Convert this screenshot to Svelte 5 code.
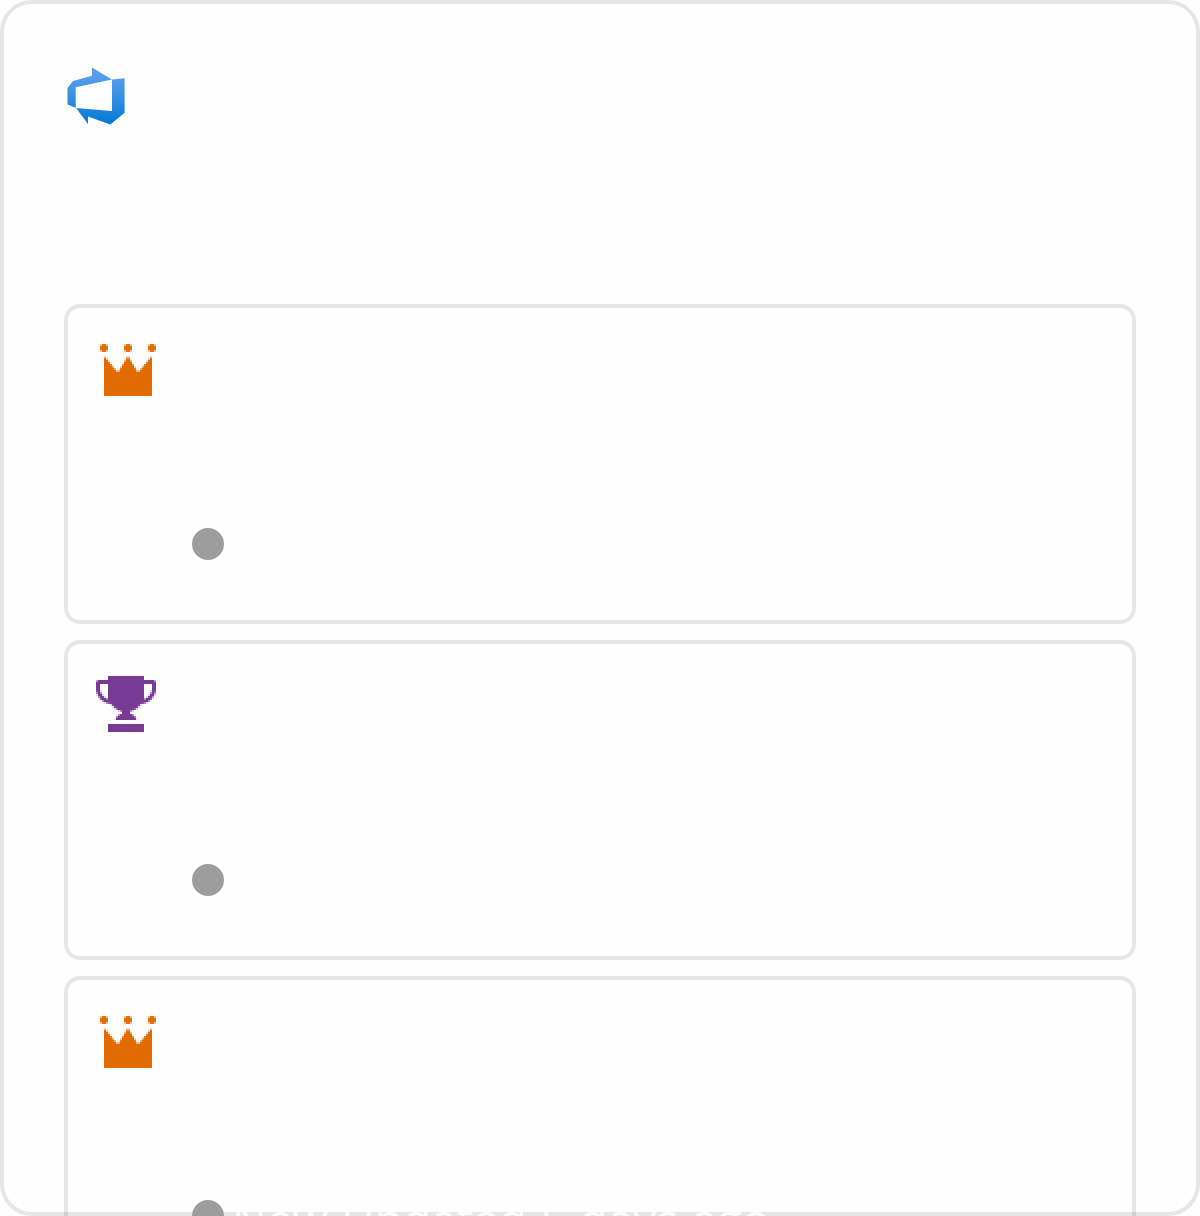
<script lang="ts">
  const items = [
    { kind: 'crown', label: 'Epic', state: '' },
    { kind: 'trophy', label: 'Feature', state: '' },
    { kind: 'crown', label: 'Epic', state: 'New Updated 5 days ago' }
  ];

  // Work item icons are drawn on a 32x32 grid; each cell's opacity is its coverage.
  function crown(x: number, y: number) {
    for (const cx of [8, 32, 56]) {
      if ((x - cx) ** 2 + (y - 12) ** 2 < 17) return true;
    }
    const u = Math.abs(x - 32);
    if (u > 24 || y > 60) return false;
    const top = u < 10 ? 20 + u * 1.65 : 36.5 - (u - 10) * 1.18;
    return y > top;
  }

  function trophy(x: number, y: number) {
    const u = Math.abs(x - 30);
    if (y > 52 && y < 60) return u < 18;
    if (u < 18 && y > 4 && y < 22) return true;
    if (y >= 22 && (u / 18) ** 2 + ((y - 22) / 18) ** 2 < 1) return true;
    if (u < 4 && y > 36 && y < 44) return true;
    if (y < 48 && (u / 10.4) ** 2 + ((y - 48) / 7) ** 2 < 1) return true;
    if (u < 12 || u > 30 || y < 8 || (y < 10 && u > 28.8)) return false;
    const outer = y < 16 || ((u - 14) / 16) ** 2 + ((y - 16) / 16) ** 2 < 1;
    const inner =
      u > 18 && y > 12 && (y < 16 ? u < 26 : ((u - 14) / 12) ** 2 + ((y - 16) / 12) ** 2 < 1);
    return outer && !inner;
  }

  function cells(inside: (x: number, y: number) => boolean) {
    const out: { x: number; y: number; a: number }[] = [];
    for (let y = 0; y < 64; y += 2) {
      for (let x = 0; x < 64; x += 2) {
        let n = 0;
        for (let j = 0; j < 4; j++)
          for (let i = 0; i < 4; i++)
            if (inside(x + 0.25 + i / 2, y + 0.25 + j / 2)) n++;
        if (n) out.push({ x, y, a: n / 16 });
      }
    }
    return out;
  }

  const icons: Record<string, { x: number; y: number; a: number }[]> = {
    crown: cells(crown),
    trophy: cells(trophy)
  };
</script>

<main class="panel">
  <header>
    <svg class="logo" viewBox="0 0 64 64" aria-label="Azure DevOps">
      <defs>
        <linearGradient id="devops" x1="0" y1="1" x2="0" y2="0">
          <stop offset="0" stop-color="#0078d4" />
          <stop offset="0.16" stop-color="#1380da" />
          <stop offset="0.53" stop-color="#3c91e5" />
          <stop offset="0.82" stop-color="#559cec" />
          <stop offset="1" stop-color="#5ea0ef" />
        </linearGradient>
      </defs>
      <path fill="url(#devops)" fill-rule="evenodd" d="M3.5 24 9 17 28 11.7V3.5L48 15.6 60.6 14.2V48.8L46.4 60.5 24 52.6V60L12 44.1 3.5 40.5ZM48 15.6 11.7 23.2V44.1L48 47Z" />
    </svg>
  </header>
  <section class="list">
    {#each items as item}
      <article class="card">
        <svg class="icon {item.kind}" viewBox="0 0 64 64" aria-label={item.label}>
          {#each icons[item.kind] as c}
            <rect x={c.x} y={c.y} width="2" height="2" fill-opacity={c.a} />
          {/each}
        </svg>
        <div class="status">
          <span class="dot"></span>
          {#if item.state}<span class="state">{item.state}</span>{/if}
        </div>
      </article>
    {/each}
  </section>
</main>

<style>
  :global(body) { background: #fefefe; overflow: hidden; }
  .panel {
    box-sizing: border-box;
    width: 1200px;
    height: 1216px;
    border: 4px solid rgba(0, 0, 0, 0.095);
    border-radius: 32px;
    padding: 60px;
    font-family: "Open Sans", "Noto Sans", sans-serif;
  }
  header { height: 240px; }
  .logo { display: block; width: 64px; height: 64px; }
  .list { display: flex; flex-direction: column; gap: 16px; }
  .card {
    box-sizing: border-box;
    flex: none;
    width: 1072px;
    height: 320px;
    border: 4px solid rgba(0, 0, 0, 0.095);
    border-radius: 16px;
    padding: 28px;
  }
  .icon { display: block; width: 64px; height: 64px; }
  .crown { fill: #e06c00; }
  .trophy { fill: #773b93; }
  .status {
    display: flex;
    align-items: center;
    gap: 8px;
    height: 64px;
    margin: 112px 0 0 96px;
  }
  .dot { width: 32px; height: 32px; border-radius: 50%; background: #9d9d9d; }
  .state {
    padding-top: 5px;
    font-size: 46px;
    line-height: 64px;
    word-spacing: 1.2px;
    color: rgba(255, 255, 255, 0.9);
    white-space: nowrap;
  }
</style>
